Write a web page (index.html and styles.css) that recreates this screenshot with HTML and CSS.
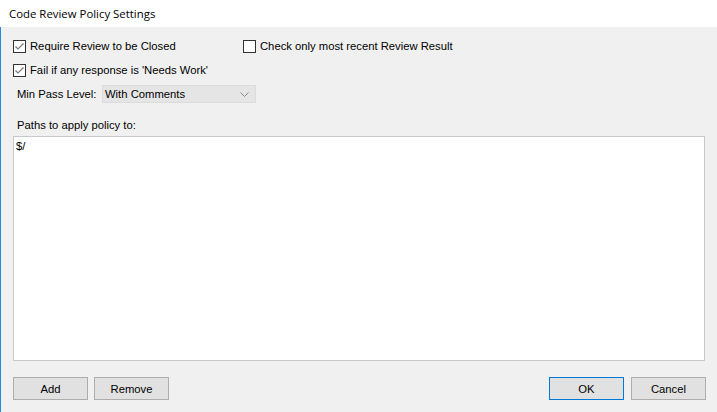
FILE: index.html
```html
<!DOCTYPE html>
<html>
<head>
<meta charset="utf-8">
<link rel="stylesheet" href="styles.css">
</head>
<body>
<div class="window">
  <div class="titlebar">Code Review Policy Settings</div>
  <div class="content">
    <div class="row row1">
      <label class="check col1"><span class="box"><svg viewBox="0 0 13 13" width="13" height="13"><path d="M2.5 6.5 L5 9 L10.5 3.5" fill="none" stroke="#7a7a7a" stroke-width="1.2"/></svg></span>Require Review to be Closed</label>
      <label class="check"><span class="box"></span>Check only most recent Review Result</label>
    </div>
    <div class="row row2">
      <label class="check"><span class="box"><svg viewBox="0 0 13 13" width="13" height="13"><path d="M2.5 6.5 L5 9 L10.5 3.5" fill="none" stroke="#7a7a7a" stroke-width="1.2"/></svg></span>Fail if any response is 'Needs Work'</label>
    </div>
    <div class="row row3">
      <span class="lbl">Min Pass Level:</span>
      <div class="combo"><span>With Comments</span><svg viewBox="0 0 9 5" width="9" height="5"><path d="M0.5 0.5 L4.5 4.5 L8.5 0.5" fill="none" stroke="#8a8a8a" stroke-width="1"/></svg></div>
    </div>
    <div class="paths-label">Paths to apply policy to:</div>
    <div class="textarea">$/</div>
    <div class="buttons">
      <div class="group">
        <button class="btn">Add</button>
        <button class="btn">Remove</button>
      </div>
      <div class="group right">
        <button class="btn default">OK</button>
        <button class="btn">Cancel</button>
      </div>
    </div>
  </div>
</div>
</body>
</html>
```
FILE: styles.css
```css
html, body {
  margin: 0;
  padding: 0;
  width: 717px;
  height: 412px;
  overflow: hidden;
  background: #f0f0f0;
}
.window {
  width: 717px;
  height: 412px;
  display: flex;
  flex-direction: column;
  font-family: "Liberation Sans", Arial, sans-serif;
  font-size: 11.25px;
  color: #000;
}
.titlebar {
  height: 27px;
  background: #fff;
  font-family: "Open Sans", "Noto Sans", sans-serif;
  font-size: 11.4px;
  line-height: 27px;
  padding-left: 9px;
  box-sizing: border-box;
  padding-bottom: 1px;
}
.content {
  flex: 1;
  border-left: 1px solid #2b87d9;
  padding: 12px 12px 0 12px;
  display: flex;
  flex-direction: column;
}
.row {
  display: flex;
  align-items: center;
  height: 14px;
}
.row2 { margin-top: 10px; }
.row3 { margin-top: 8px; height: 18px; padding-left: 4px; }
.check {
  display: flex;
  align-items: center;
  gap: 4px;
  white-space: nowrap;
}
.col1 { width: 230px; }
.box {
  width: 11px;
  height: 11px;
  border: 1px solid #333;
  background: #fff;
  display: flex;
  align-items: center;
  justify-content: center;
  overflow: hidden;
}
.box svg { flex: none; }
.lbl { width: 85px; }
.combo {
  width: 144px;
  height: 16px;
  border: 1px solid #dcdcdc;
  background: #e5e5e5;
  display: flex;
  align-items: center;
  justify-content: space-between;
  padding: 0 6px 0 2px;
  box-sizing: content-box;
}
.paths-label {
  margin-top: 15px;
  padding-left: 4px;
  height: 14px;
  line-height: 14px;
}
.textarea {
  margin-top: 4px;
  background: #fff;
  border: 1px solid #c8c8c8;
  padding: 2px 2px;
  box-sizing: border-box;
  width: 692px;
  height: 225px;
  line-height: 14px;
}
.buttons {
  margin-top: 16px;
  display: flex;
  justify-content: space-between;
  width: 693px;
}
.group { display: flex; gap: 6px; }
.group.right { gap: 7px; }
.btn {
  width: 75px;
  height: 23px;
  background: #e1e1e1;
  border: 1px solid #adadad;
  font-family: "Liberation Sans", Arial, sans-serif;
  font-size: 11.25px;
  color: #000;
  padding: 0;
  margin: 0;
}
.btn.default {
  border: 1px solid #0078d7;
}
```
